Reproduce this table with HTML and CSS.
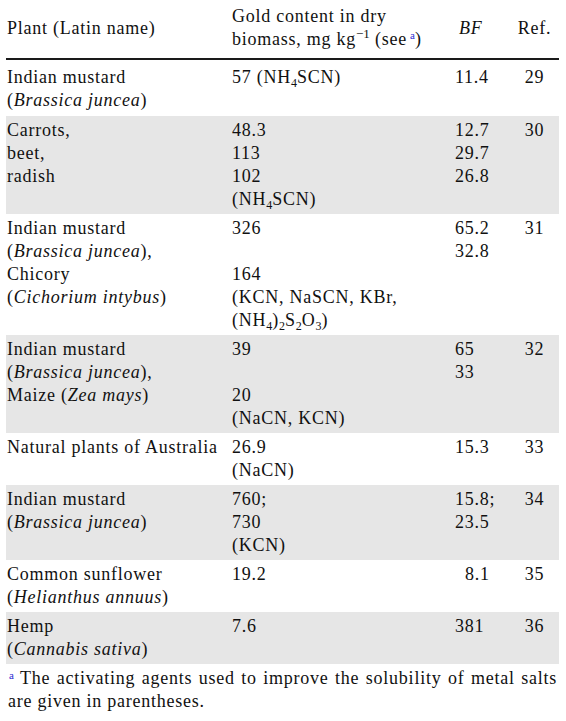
FILE: index.html
```html
<!DOCTYPE html>
<html lang="en">
<head>
<meta charset="utf-8">
<title>Gold content in plants</title>
<link rel="stylesheet" href="styles.css">
</head>
<body>
<div class="page">
<table class="data">
  <colgroup>
    <col class="c-plant">
    <col class="c-gold">
    <col class="c-bf">
    <col class="c-ref">
  </colgroup>
  <thead>
    <tr>
      <th class="plant">Plant (Latin name)</th>
      <th class="gold">Gold content in dry<br>biomass, mg kg<sup class="exp">&minus;1</sup> (see<sup class="note">a</sup>)</th>
      <th class="bf"><i>BF</i></th>
      <th class="ref">Ref.</th>
    </tr>
  </thead>
  <tbody>
    <tr class="first">
      <td class="plant">Indian mustard<br>(<i>Brassica juncea</i>)</td>
      <td class="gold">57 (NH<sub>4</sub>SCN)</td>
      <td class="bf">11.4</td>
      <td class="ref">29</td>
    </tr>
    <tr class="shade">
      <td class="plant">Carrots,<br>beet,<br>radish</td>
      <td class="gold">48.3<br>113<br>102<br>(NH<sub>4</sub>SCN)</td>
      <td class="bf">12.7<br>29.7<br>26.8</td>
      <td class="ref">30</td>
    </tr>
    <tr>
      <td class="plant">Indian mustard<br>(<i>Brassica juncea</i>),<br>Chicory<br>(<i>Cichorium intybus</i>)</td>
      <td class="gold">326<br>&nbsp;<br>164<br>(KCN, NaSCN, KBr,<br>(NH<sub>4</sub>)<sub>2</sub>S<sub>2</sub>O<sub>3</sub>)</td>
      <td class="bf">65.2<br>32.8</td>
      <td class="ref">31</td>
    </tr>
    <tr class="shade">
      <td class="plant">Indian mustard<br>(<i>Brassica juncea</i>),<br>Maize (<i>Zea mays</i>)</td>
      <td class="gold">39<br>&nbsp;<br>20<br>(NaCN, KCN)</td>
      <td class="bf">65<br>33</td>
      <td class="ref">32</td>
    </tr>
    <tr>
      <td class="plant">Natural plants of Australia</td>
      <td class="gold">26.9<br>(NaCN)</td>
      <td class="bf">15.3</td>
      <td class="ref">33</td>
    </tr>
    <tr class="shade">
      <td class="plant">Indian mustard<br>(<i>Brassica juncea</i>)</td>
      <td class="gold">760;<br>730<br>(KCN)</td>
      <td class="bf">15.8;<br>23.5</td>
      <td class="ref">34</td>
    </tr>
    <tr>
      <td class="plant">Common sunflower<br>(<i>Helianthus annuus</i>)</td>
      <td class="gold">19.2</td>
      <td class="bf"><span class="pad">8.1</span></td>
      <td class="ref">35</td>
    </tr>
    <tr class="shade">
      <td class="plant">Hemp<br>(<i>Cannabis sativa</i>)</td>
      <td class="gold">7.6</td>
      <td class="bf">381</td>
      <td class="ref">36</td>
    </tr>
  </tbody>
</table>
<p class="footnote"><sup class="fn-mark">a</sup>The activating agents used to improve the solubility of metal salts are given in parentheses.</p>
</div>
</body>
</html>
```

FILE: styles.css
```css
html, body {
  margin: 0;
  padding: 0;
  background: #ffffff;
}

body {
  font-family: "Liberation Serif", "Times New Roman", serif;
  font-size: 18px;
  line-height: 23px;
  letter-spacing: 0.75px;
  color: #111111;
}

.page {
  padding: 5px 9px 0 6px;
}

.data {
  width: 553px;
  table-layout: fixed;
  border-collapse: collapse;
  border-spacing: 0;
}

.c-plant { width: 226px; }
.c-gold { width: 223px; }
.c-bf { width: 55px; }
.c-ref { width: 49px; }

.data th {
  font-weight: normal;
  text-align: left;
  vertical-align: middle;
  padding: 0 0 7px 0;
  border-bottom: 2px solid #1a1a1a;
}

.data th.bf {
  padding-left: 4px;
}

.data td {
  text-align: left;
  vertical-align: top;
  padding: 3px 0 3px 0;
  white-space: nowrap;
}

.data .plant {
  padding-left: 1px;
}

.data .ref {
  text-align: center;
}

.data tr.first td {
  padding-top: 6px;
  padding-bottom: 4px;
}

.data tr.shade td {
  background: #e6e6e6;
}

.pad {
  padding-left: 10px;
}

sub {
  font-size: 12px;
  line-height: 0;
  vertical-align: -4px;
  letter-spacing: 0;
}

.exp {
  font-size: 13px;
  line-height: 0;
  vertical-align: 7px;
  letter-spacing: 0;
}

.note {
  font-size: 11px;
  line-height: 0;
  vertical-align: 6px;
  color: #2a2ad0;
  letter-spacing: 0;
  margin-left: 3px;
}

.footnote {
  margin: 3px 0 0 0;
  padding-left: 2px;
  text-align: justify;
}

.fn-mark {
  display: inline-block;
  font-size: 11px;
  line-height: 11px;
  vertical-align: 5px;
  color: #2a2ad0;
  letter-spacing: 0;
  margin-left: 1px;
  margin-right: 6px;
}
```
